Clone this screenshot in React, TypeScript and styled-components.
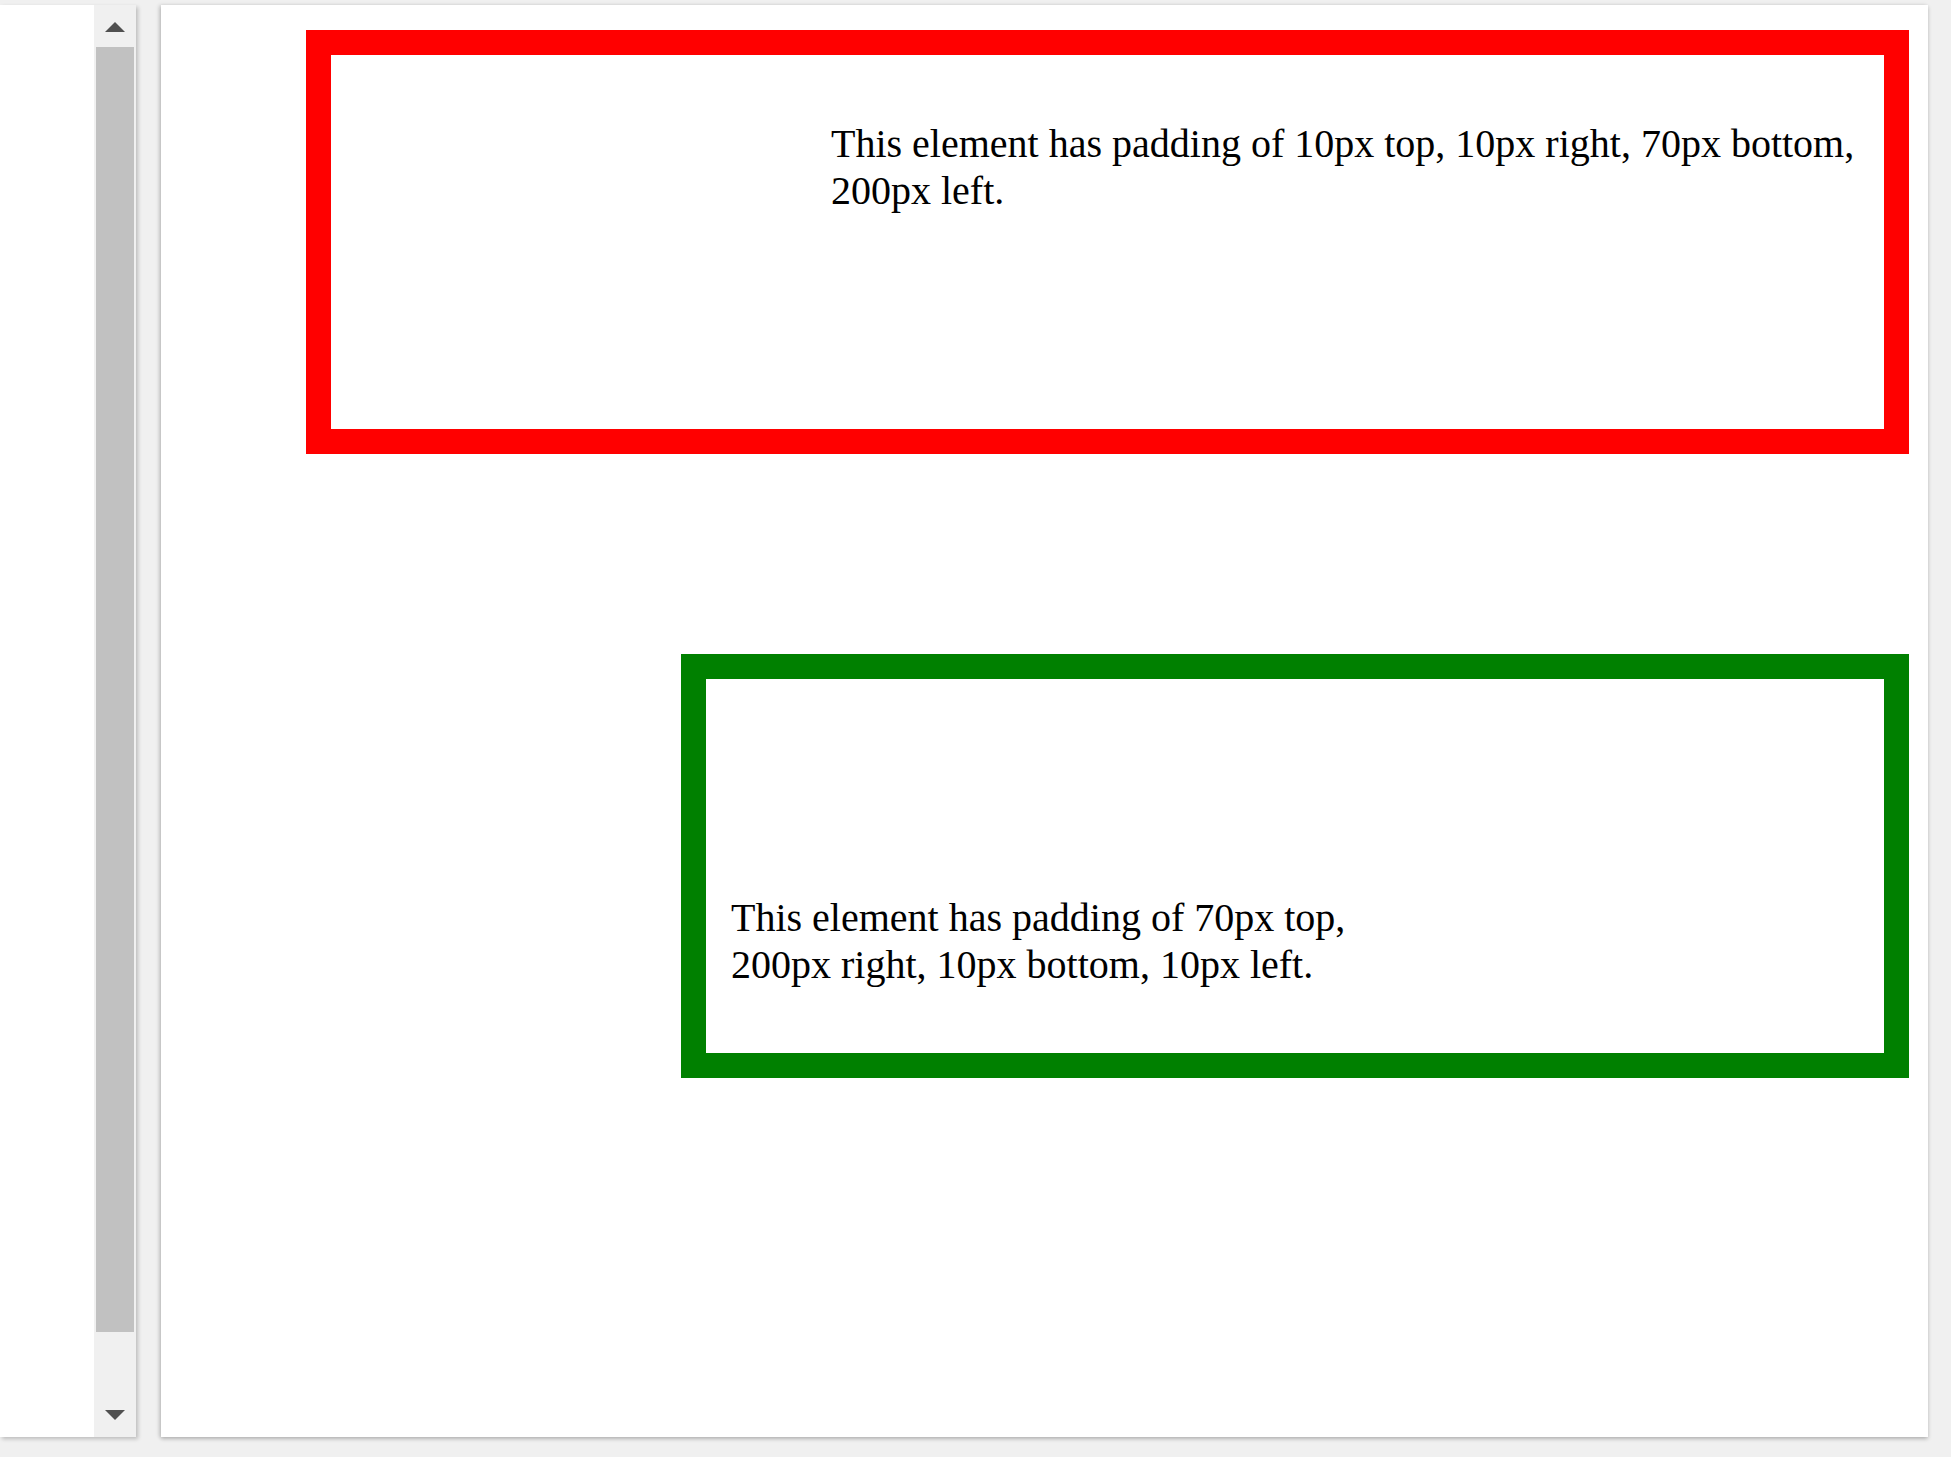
import React from 'react';
import styled, { createGlobalStyle } from 'styled-components';

const GlobalStyle = createGlobalStyle`
  html, body {
    margin: 0;
    padding: 0;
    background: #f0f0f0;
  }
`;

const Page = styled.div`
  display: flex;
  align-items: flex-start;
  gap: 25px;
  padding-top: 5px;
  height: 1457px;
  box-sizing: border-box;
  overflow: hidden;
`;

const SidePane = styled.div`
  display: flex;
  width: 136px;
  height: 1432px;
  background: #fff;
  box-shadow: 2px 2px 4px rgba(0, 0, 0, 0.22);
`;

const SideBlank = styled.div`
  flex: 1;
`;

const Scrollbar = styled.div`
  width: 42px;
  display: flex;
  flex-direction: column;
  align-items: center;
  background: #f0f0f0;
`;

const ArrowButton = styled.div<{ $down?: boolean }>`
  height: ${p => (p.$down ? '105px' : '42px')};
  width: 100%;
  flex-shrink: 0;
  display: flex;
  justify-content: center;
  align-items: flex-start;
  padding-top: ${p => (p.$down ? '78px' : '17px')};
  box-sizing: border-box;

  &::before {
    content: '';
    width: 0;
    height: 0;
    border-left: 10px solid transparent;
    border-right: 10px solid transparent;
    ${p =>
      p.$down ? 'border-top: 10px solid #505050;' : 'border-bottom: 10px solid #505050;'}
  }
`;

const Thumb = styled.div`
  width: 38px;
  flex: 1;
  background: #c1c1c1;
`;

const MainPane = styled.div`
  width: 1767px;
  height: 1432px;
  background: #fff;
  box-shadow: 0 2px 4px rgba(0, 0, 0, 0.22), -2px 0 4px rgba(0, 0, 0, 0.12);
  padding-top: 25px;
  box-sizing: border-box;
  font-family: 'Liberation Serif', 'Times New Roman', serif;
  font-size: 40px;
  color: #000;
`;

const PaddedBox = styled.div<{ $color: string; $pad: string; $left: number; $top: number }>`
  border: 25px solid ${p => p.$color};
  padding: ${p => p.$pad};
  margin: ${p => p.$top}px 19px 0 ${p => p.$left}px;

  p {
    margin: 40px 0;
    line-height: 47px;
  }
`;

const App: React.FC = () => {
  return (
    <>
      <GlobalStyle />
      <Page>
        <SidePane>
          <SideBlank />
          <Scrollbar>
            <ArrowButton />
            <Thumb />
            <ArrowButton $down />
          </Scrollbar>
        </SidePane>

        <MainPane>
          <PaddedBox $color="#ff0000" $pad="25px 25px 175px 500px" $left={145} $top={0}>
            <p>This element has padding of 10px top, 10px right, 70px bottom, 200px left.</p>
          </PaddedBox>
          <PaddedBox $color="#008000" $pad="175px 500px 25px 25px" $left={520} $top={200}>
            <p>This element has padding of 70px top, 200px right, 10px bottom, 10px left.</p>
          </PaddedBox>
        </MainPane>
      </Page>
    </>
  );
};

export default App;
